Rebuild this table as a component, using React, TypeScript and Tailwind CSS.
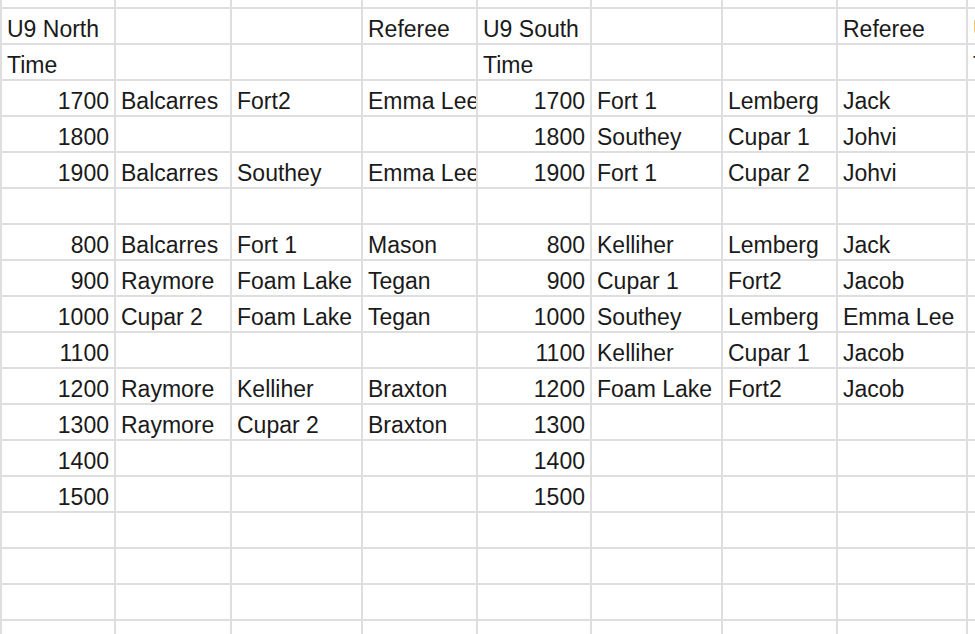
const rows: string[][] = [
  ['U9 North', '', '', 'Referee', 'U9 South', '', '', 'Referee', 'U9 East'],
  ['Time', '', '', '', 'Time', '', '', '', 'Time'],
  ['1700', 'Balcarres', 'Fort2', 'Emma Lee', '1700', 'Fort 1', 'Lemberg', 'Jack', ''],
  ['1800', '', '', '', '1800', 'Southey', 'Cupar 1', 'Johvi', ''],
  ['1900', 'Balcarres', 'Southey', 'Emma Lee', '1900', 'Fort 1', 'Cupar 2', 'Johvi', ''],
  ['', '', '', '', '', '', '', '', ''],
  ['800', 'Balcarres', 'Fort 1', 'Mason', '800', 'Kelliher', 'Lemberg', 'Jack', ''],
  ['900', 'Raymore', 'Foam Lake', 'Tegan', '900', 'Cupar 1', 'Fort2', 'Jacob', ''],
  ['1000', 'Cupar 2', 'Foam Lake', 'Tegan', '1000', 'Southey', 'Lemberg', 'Emma Lee', ''],
  ['1100', '', '', '', '1100', 'Kelliher', 'Cupar 1', 'Jacob', ''],
  ['1200', 'Raymore', 'Kelliher', 'Braxton', '1200', 'Foam Lake', 'Fort2', 'Jacob', ''],
  ['1300', 'Raymore', 'Cupar 2', 'Braxton', '1300', '', '', '', ''],
  ['1400', '', '', '', '1400', '', '', '', ''],
  ['1500', '', '', '', '1500', '', '', '', ''],
  ['', '', '', '', '', '', '', '', ''],
  ['', '', '', '', '', '', '', '', ''],
  ['', '', '', '', '', '', '', '', ''],
]

function Cell({ value }: { value: string }) {
  const numeric = /^\d+$/.test(value)
  return (
    <div
      className={
        'h-[34px] overflow-hidden whitespace-nowrap bg-white px-[5px] pt-[6px] leading-[28px] ' +
        (numeric ? 'text-right' : 'text-left')
      }
    >
      {value}
    </div>
  )
}

export default function App() {
  return (
    <div className="h-[634px] w-[975px] overflow-hidden bg-white">
      <div
        className="grid grid-cols-[112px_114px_129px_113px_112px_129px_113px_128px_100px] gap-[2px] bg-[#dedede] pl-[2px] text-[23px] text-[#1a1a1a]"
        style={{ fontFamily: '"Liberation Sans", Arial, sans-serif' }}
      >
        {Array.from({ length: 9 }).map((_, i) => (
          <div key={`top-${i}`} className="h-[7px] bg-white" />
        ))}
        {rows.map((row, r) =>
          row.map((value, c) => <Cell key={`${r}-${c}`} value={value} />)
        )}
        {Array.from({ length: 9 }).map((_, i) => (
          <div key={`bottom-${i}`} className="h-[20px] bg-white" />
        ))}
      </div>
    </div>
  )
}
